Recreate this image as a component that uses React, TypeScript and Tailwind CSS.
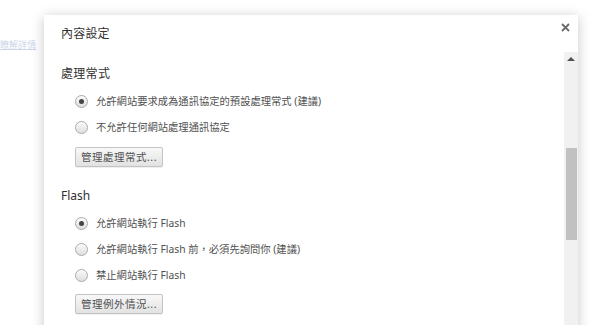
const FONT = "font-['Segoe_UI','Noto_Sans','Noto_Sans_CJK_TC',sans-serif]"

function Radio({ checked }: { checked?: boolean }) {
  return (
    <span className="flex h-[13px] w-[13px] flex-shrink-0 items-center justify-center rounded-full border border-[#a9a9a9] bg-gradient-to-b from-[#fafafa] to-[#dedede] shadow-[inset_0_1px_1px_rgba(255,255,255,0.8)]">
      {checked && <span className="h-[5px] w-[5px] rounded-full bg-[#444]" />}
    </span>
  )
}

function Option({ label, checked }: { label: string; checked?: boolean }) {
  return (
    <div className="flex h-[26px] items-center gap-[8px] pl-[14px]">
      <Radio checked={checked} />
      <span className="text-[10.3px] leading-none text-[#505050]">{label}</span>
    </div>
  )
}

function Button({ label }: { label: string }) {
  return (
    <div className="ml-[14px] flex h-[20px] w-[88px] items-center justify-center rounded-[2px] border border-[#c3c3c3] bg-gradient-to-b from-[#f8f8f8] to-[#e2e2e2] text-[10.5px] leading-none tracking-[0.5px] text-[#505050] shadow-[0_1px_0_rgba(0,0,0,0.06)]">
      {label}
    </div>
  )
}

export default function App() {
  return (
    <div className={`relative h-[325px] w-[600px] overflow-hidden bg-white ${FONT}`}>
      {/* page behind the dialog */}
      <div className="pt-[39px] text-[9px] leading-[12px] text-[#a9b9dc] underline">瞭解詳情</div>
      <div className="absolute inset-0 bg-white/40" />

      {/* dialog */}
      <div className="absolute bottom-[-20px] left-[44px] top-[15px] flex w-[534px] flex-col bg-white shadow-[0_2px_12px_rgba(0,0,0,0.22)]">
        <div className="flex h-[37px] items-start justify-between">
          <div className="pl-[17px] pt-[12px] text-[12px] leading-[14px] tracking-[0.2px] text-[#333]">內容設定</div>
          <svg className="mr-[8px] mt-[8px]" width="9" height="9" viewBox="0 0 9 9">
            <path d="M1 1 L8 8 M8 1 L1 8" stroke="#6b6b6b" strokeWidth="1.8" />
          </svg>
        </div>

        <div className="flex min-h-0 flex-1">
          <div className="flex-1 pl-[17px]">
            <div className="mb-[4px] mt-[12px] flex h-[20px] items-center text-[12px] tracking-[0.3px] text-[#303030]">處理常式</div>
            <Option checked label="允許網站要求成為通訊協定的預設處理常式 (建議)" />
            <Option label="不允許任何網站處理通訊協定" />
            <div className="mt-[7px]">
              <Button label="管理處理常式..." />
            </div>

            <div className="mb-[4px] mt-[19px] flex h-[20px] items-center text-[12px] text-[#303030]">Flash</div>
            <Option checked label="允許網站執行 Flash" />
            <Option label="允許網站執行 Flash 前，必須先詢問你 (建議)" />
            <Option label="禁止網站執行 Flash" />
            <div className="mt-[6px]">
              <Button label="管理例外情況..." />
            </div>
          </div>

          {/* scrollbar */}
          <div className="flex w-[14px] flex-col items-center bg-[#f1f1f1]">
            <svg className="mt-[5px]" width="8" height="4" viewBox="0 0 8 4">
              <path d="M0 4 L4 0 L8 4 Z" fill="#505050" />
            </svg>
            <div className="ml-[2px] mt-[87px] h-[92px] w-[11px] self-start bg-[#c1c1c1]" />
          </div>
        </div>
      </div>
    </div>
  )
}
